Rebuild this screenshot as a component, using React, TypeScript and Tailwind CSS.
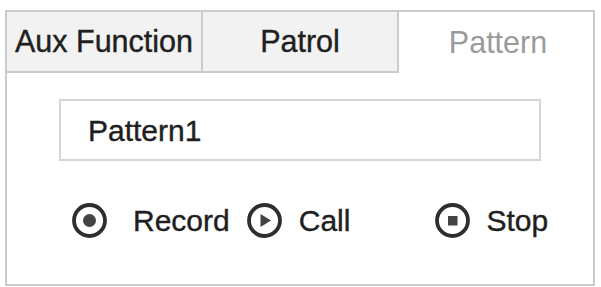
import React from "react";

const font = { fontFamily: '"Liberation Sans", Arial, sans-serif' };

function RecordIcon() {
  return (
    <svg width="35" height="35" viewBox="0 0 35 35" className="shrink-0">
      <circle cx="17.5" cy="17.5" r="15.5" fill="none" stroke="#2e2e2e" strokeWidth="3.8" />
      <circle cx="17.5" cy="17.5" r="6.5" fill="#444" />
    </svg>
  );
}

function PlayIcon() {
  return (
    <svg width="35" height="35" viewBox="0 0 35 35" className="shrink-0">
      <circle cx="17.5" cy="17.5" r="15.5" fill="none" stroke="#2e2e2e" strokeWidth="3.8" />
      <polygon points="13.5,11 13.5,24 24,17.5" fill="#444" />
    </svg>
  );
}

function StopIcon() {
  return (
    <svg width="35" height="35" viewBox="0 0 35 35" className="shrink-0">
      <circle cx="17.5" cy="17.5" r="15.5" fill="none" stroke="#2e2e2e" strokeWidth="3.8" />
      <rect x="13" y="13" width="9.5" height="9.5" fill="#444" />
    </svg>
  );
}

export default function App() {
  return (
    <div className="h-[287px] w-[601px] bg-white pl-[5px] pt-[10px]" style={font}>
      <div className="flex h-[276px] w-[590px] flex-col border-2 border-[#cbcbcb] bg-white">
        {/* Tabs */}
        <div className="flex h-[61px] shrink-0">
          <div className="flex w-[196px] items-center justify-center border-b-2 border-r-2 border-[#cbcbcb] bg-[#f2f2f2] text-[30.5px] text-[#1f1f1f] [-webkit-text-stroke:0.4px_#1f1f1f]">
            Aux Function
          </div>
          <div className="flex w-[196px] items-center justify-center border-b-2 border-r-2 border-[#cbcbcb] bg-[#f2f2f2] text-[30.5px] text-[#1f1f1f] [-webkit-text-stroke:0.4px_#1f1f1f]">
            Patrol
          </div>
          <div className="flex flex-1 items-center justify-center pl-[4px] text-[30.5px] text-[#9a9a9a]">
            Pattern
          </div>
        </div>

        {/* Name field */}
        <div className="ml-[52px] mt-[26px] flex h-[62px] w-[482px] items-center border-2 border-[#d6d6d6] pl-[27px] text-[30px] text-[#1f1f1f] [-webkit-text-stroke:0.4px_#1f1f1f]">
          Pattern1
        </div>

        {/* Controls */}
        <div className="mt-[37px] flex items-center text-[30px] text-[#1f1f1f] [-webkit-text-stroke:0.4px_#1f1f1f]">
          <div className="ml-[65px]">
            <RecordIcon />
          </div>
          <span className="ml-[26px]">Record</span>
          <div className="ml-[17px]">
            <PlayIcon />
          </div>
          <span className="ml-[17px]">Call</span>
          <div className="ml-[85px]">
            <StopIcon />
          </div>
          <span className="ml-[16px]">Stop</span>
        </div>
      </div>
    </div>
  );
}
